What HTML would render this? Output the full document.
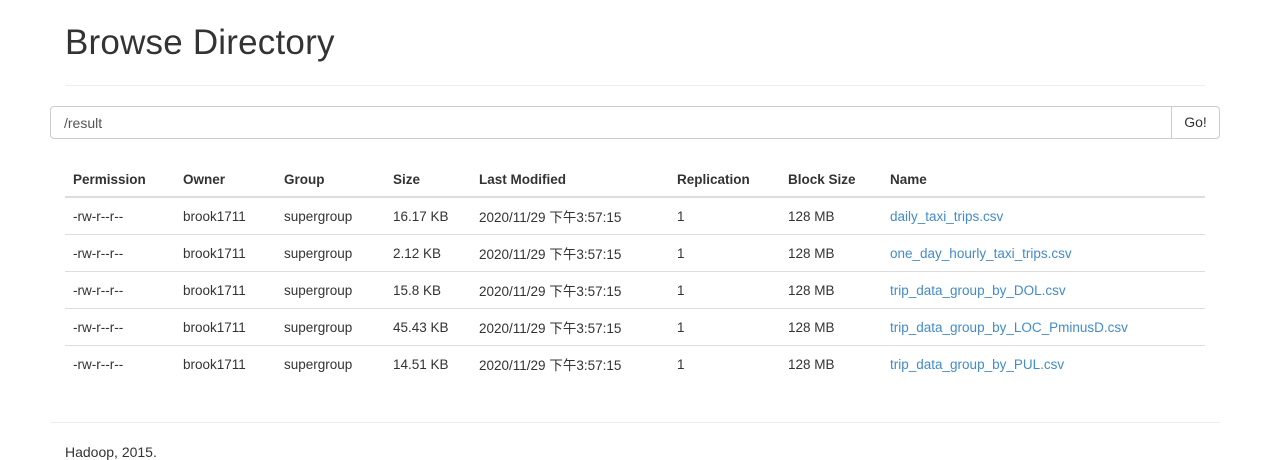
<!DOCTYPE html>
<html><head><meta charset="utf-8"><style>
body{margin:0;background:#fff;font-family:"Liberation Sans","Noto Sans CJK SC",sans-serif;color:#333;font-size:14px;width:1274px;height:460px;overflow:hidden;position:relative}
h1{position:absolute;left:65px;top:23px;margin:0;font-weight:400;font-size:35px;color:#333;letter-spacing:0.2px}
.hr1{position:absolute;left:65px;width:1140px;top:85px;border-top:1px solid #eee}
.inp{position:absolute;left:50px;top:106px;height:33px;border:1px solid #ccc;border-radius:4px 0 0 4px;box-sizing:border-box;width:1122px}
.inp span{position:absolute;left:13px;top:8px;color:#555;font-size:14px}
.go{position:absolute;left:1171px;top:106px;width:49px;height:33px;border:1px solid #ccc;border-radius:0 4px 4px 0;box-sizing:border-box;text-align:center;line-height:31px;font-size:14px;color:#333}
table{position:absolute;left:65px;top:163px;width:1140px;border-collapse:collapse;table-layout:fixed;font-size:13.5px}
th{text-align:left;font-weight:bold;height:33px;border-bottom:2px solid #ddd;padding:0 0 0 8px;vertical-align:middle}
td{height:36px;border-bottom:1px solid #ddd;padding:0 0 0 8px;vertical-align:middle;white-space:nowrap}
tr:last-child td{border-bottom:none}
a{color:#428bca;text-decoration:none}
.hr2{position:absolute;left:50px;width:1170px;top:422px;border-top:1px solid #eee}
.ft{position:absolute;left:65px;top:444px;font-size:14px}
</style></head><body>
<h1>Browse Directory</h1>
<div class="hr1"></div>
<div class="inp"><span>/result</span></div>
<div class="go">Go!</div>
<table>
<colgroup><col style="width:110px"><col style="width:101px"><col style="width:109px"><col style="width:86px"><col style="width:198px"><col style="width:111px"><col style="width:102px"><col></colgroup>
<tr><th>Permission</th><th>Owner</th><th>Group</th><th>Size</th><th>Last Modified</th><th>Replication</th><th>Block Size</th><th>Name</th></tr>
<tr><td>-rw-r--r--</td><td>brook1711</td><td>supergroup</td><td>16.17 KB</td><td>2020/11/29 下午3:57:15</td><td>1</td><td>128 MB</td><td><a>daily_taxi_trips.csv</a></td></tr>
<tr><td>-rw-r--r--</td><td>brook1711</td><td>supergroup</td><td>2.12 KB</td><td>2020/11/29 下午3:57:15</td><td>1</td><td>128 MB</td><td><a>one_day_hourly_taxi_trips.csv</a></td></tr>
<tr><td>-rw-r--r--</td><td>brook1711</td><td>supergroup</td><td>15.8 KB</td><td>2020/11/29 下午3:57:15</td><td>1</td><td>128 MB</td><td><a>trip_data_group_by_DOL.csv</a></td></tr>
<tr><td>-rw-r--r--</td><td>brook1711</td><td>supergroup</td><td>45.43 KB</td><td>2020/11/29 下午3:57:15</td><td>1</td><td>128 MB</td><td><a>trip_data_group_by_LOC_PminusD.csv</a></td></tr>
<tr><td>-rw-r--r--</td><td>brook1711</td><td>supergroup</td><td>14.51 KB</td><td>2020/11/29 下午3:57:15</td><td>1</td><td>128 MB</td><td><a>trip_data_group_by_PUL.csv</a></td></tr>
</table>
<div class="hr2"></div>
<div class="ft">Hadoop, 2015.</div>
</body></html>
